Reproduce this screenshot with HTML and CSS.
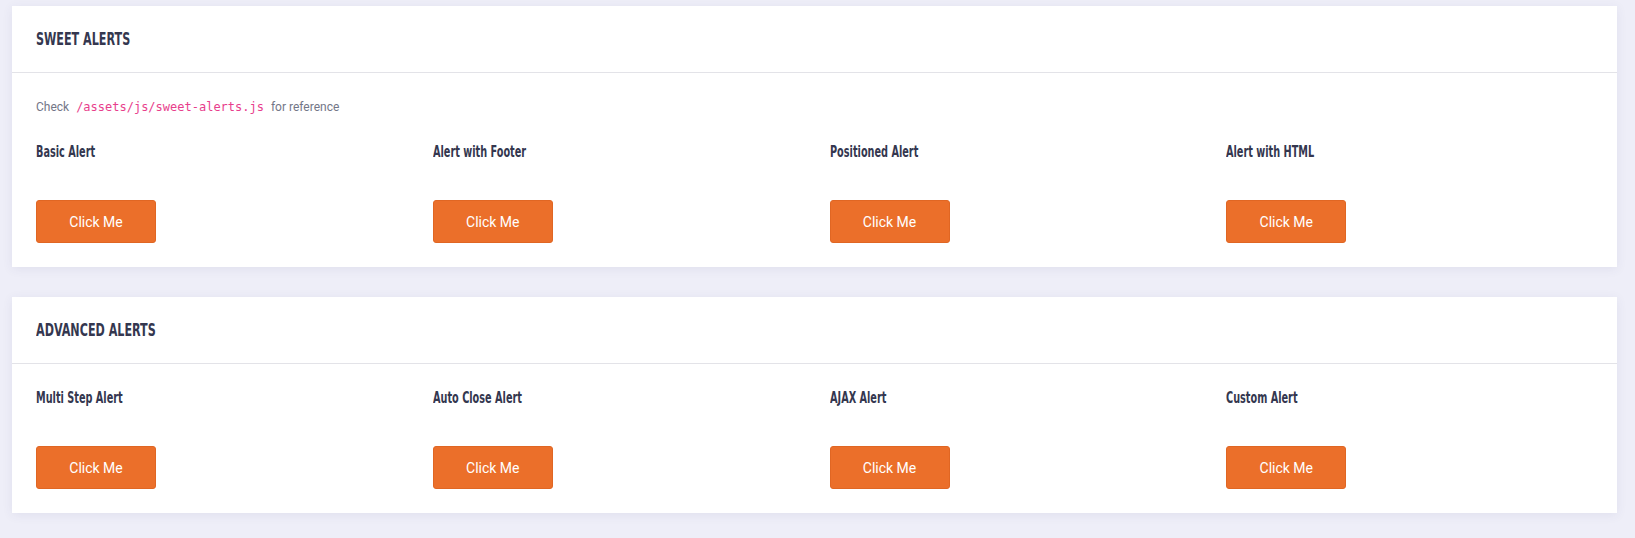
FILE: index.html
```html
<!DOCTYPE html>
<html lang="en">
<head>
<meta charset="utf-8">
<title>Sweet Alerts</title>
<link rel="stylesheet" href="styles.css">
</head>
<body>
  <main class="page">
    <section class="card">
      <header class="card-header">
        <h4 class="card-title"><span class="cond">SWEET ALERTS</span></h4>
      </header>
      <div class="card-body">
        <p class="hint">Check <code>/assets/js/sweet-alerts.js</code> for reference</p>
        <div class="grid">
          <div class="item"><h5 class="label"><span class="cond">Basic Alert</span></h5><button class="btn">Click Me</button></div>
          <div class="item"><h5 class="label"><span class="cond">Alert with Footer</span></h5><button class="btn">Click Me</button></div>
          <div class="item"><h5 class="label"><span class="cond">Positioned Alert</span></h5><button class="btn">Click Me</button></div>
          <div class="item"><h5 class="label"><span class="cond">Alert with HTML</span></h5><button class="btn">Click Me</button></div>
        </div>
      </div>
    </section>
    <section class="card">
      <header class="card-header">
        <h4 class="card-title"><span class="cond">ADVANCED ALERTS</span></h4>
      </header>
      <div class="card-body">
        <div class="grid">
          <div class="item"><h5 class="label"><span class="cond">Multi Step Alert</span></h5><button class="btn">Click Me</button></div>
          <div class="item"><h5 class="label"><span class="cond">Auto Close Alert</span></h5><button class="btn">Click Me</button></div>
          <div class="item"><h5 class="label"><span class="cond">AJAX Alert</span></h5><button class="btn">Click Me</button></div>
          <div class="item"><h5 class="label"><span class="cond">Custom Alert</span></h5><button class="btn">Click Me</button></div>
        </div>
      </div>
    </section>
  </main>
</body>
</html>
```
FILE: styles.css
```css
* { box-sizing: border-box; }
html, body { margin: 0; padding: 0; }
body {
  background: #eeeef8;
  font-family: Roboto, "Liberation Sans", sans-serif;
  color: #6c6f80;
}
.page {
  display: flex;
  flex-direction: column;
  gap: 30px;
  padding: 6px 18px 26px 12px;
}
.card {
  background: #ffffff;
  box-shadow: 0 2px 10px rgba(60, 60, 120, 0.08);
}
.card-header {
  padding: 24px 24px;
  border-bottom: 1px solid #e3e3e8;
  height: 67px;
}
.card-title {
  margin: 0;
  font-family: "DejaVu Sans Condensed", "Liberation Sans", sans-serif;
  font-weight: 700;
  font-size: 17px;
  line-height: 19px;
  color: #34374f;
}
.cond {
  display: inline-block;
  transform: scaleX(0.73);
  transform-origin: left center;
  white-space: nowrap;
}
.card-body {
  padding: 24px;
}
.hint {
  margin: 0 0 24px;
  font-size: 12px;
  line-height: 21px;
  color: #737687;
}
.hint code {
  font-family: "DejaVu Sans Mono", "Liberation Mono", monospace;
  font-size: 12px;
  color: #e83e8c;
  padding: 0 4px;
}
.grid {
  display: grid;
  grid-template-columns: repeat(4, 1fr);
  column-gap: 30px;
}
.item {
  display: flex;
  flex-direction: column;
  align-items: flex-start;
}
.label {
  margin: 0 0 38px;
  font-family: "DejaVu Sans Condensed", "Liberation Sans", sans-serif;
  font-weight: 700;
  font-size: 15px;
  line-height: 20px;
  color: #34374f;
}
.label .cond { transform: scaleX(0.72); }
.btn {
  width: 120px;
  height: 43px;
  border: 1px solid #e06623;
  border-radius: 3px;
  background: #eb6f2a;
  color: #ffffff;
  font-family: Roboto, "Liberation Sans", sans-serif;
  font-size: 14px;
  padding: 0;
}
```
